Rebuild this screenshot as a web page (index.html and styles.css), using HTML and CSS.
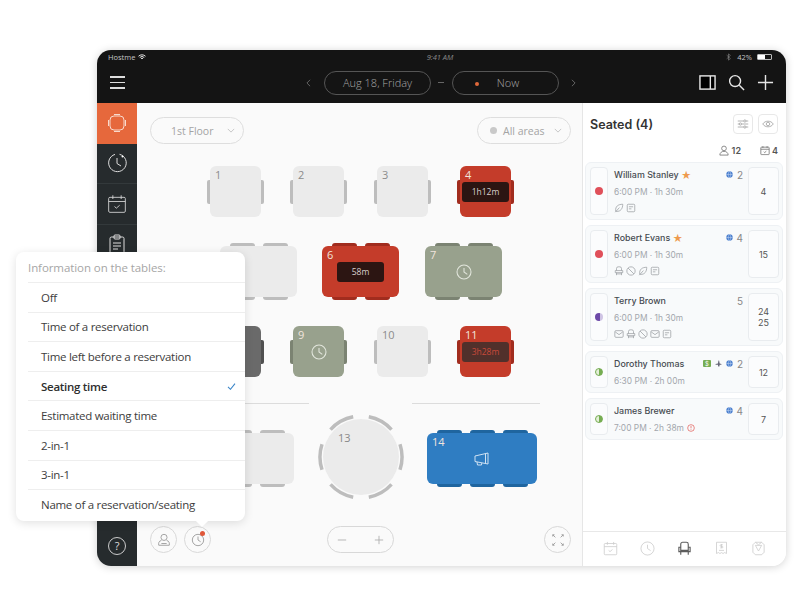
FILE: index.html
```html
<!DOCTYPE html>
<html lang="en">
<head>
    <meta charset="UTF-8">
    <title>Hostme</title>
    <link rel="stylesheet" href="styles.css">
</head>
<body>
    <svg class="defs" width="0" height="0">
        <symbol id="i-clock" viewBox="0 0 24 24"><circle cx="12" cy="12" r="10.5"/><path d="M12 6v6l5 3.5"/></symbol>
        <symbol id="i-cal" viewBox="0 0 24 24"><rect x="2" y="4" width="20" height="18" rx="1.5"/><path d="M2 9h20M7 1.5V6M17 1.5V6M9 15l2.2 2 4-3.5"/></symbol>
        <symbol id="i-leaf" viewBox="0 0 24 24"><path d="M21 3C10 3 3 8 4 19c0 1 1 2 2 1 10 1 15-7 15-17zM3 22l10-11"/></symbol>
        <symbol id="i-note" viewBox="0 0 24 24"><rect x="3" y="3" width="18" height="18" rx="2.5"/><path d="M7 9h10M7 14h6"/></symbol>
        <symbol id="i-chair" viewBox="0 0 24 24"><path d="M6 11V6a4 4 0 0 1 4-4h4a4 4 0 0 1 4 4v5M3 11h18v5H3zM6 16v6M18 16v6M6 19h12"/></symbol>
        <symbol id="i-ban" viewBox="0 0 24 24"><circle cx="12" cy="12" r="10"/><path d="M5 5l14 14"/></symbol>
        <symbol id="i-mail" viewBox="0 0 24 24"><rect x="2" y="4" width="20" height="16" rx="2.5"/><path d="M3 7l9 6.5L21 7"/></symbol>
        <symbol id="i-globe" viewBox="0 0 24 24"><circle cx="12" cy="12" r="11" class="solid"/><path class="cut" d="M1 12h22M12 1c-6 6-6 16 0 22M12 1c6 6 6 16 0 22"/></symbol>
    </svg>

    <div class="tablet">
        <div class="status-bar">
            <div class="status-left">
                <span>Hostme</span>
                <svg class="wifi" viewBox="0 0 16 12"><path d="M1 4.5a10 10 0 0 1 14 0M3.5 7a6.5 6.5 0 0 1 9 0M6 9.3a3 3 0 0 1 4 0"/></svg>
            </div>
            <span class="status-time">9:41 AM</span>
            <div class="status-right">
                <svg class="bt" viewBox="0 0 8 12"><path d="M1 3l6 5.5L4 11V1l3 2.5L1 9"/></svg>
                <span>42%</span>
                <span class="battery"><span class="battery-level"></span></span>
            </div>
        </div>

        <div class="top-bar">
            <div class="burger"><span></span><span></span><span></span></div>
            <div class="date-nav">
                <svg class="chev" viewBox="0 0 6 10"><path d="M5 1L1 5l4 4"/></svg>
                <div class="date-pill">Aug 18, Friday</div>
                <span class="dash"></span>
                <div class="date-pill now"><span class="now-dot"></span>Now</div>
                <svg class="chev" viewBox="0 0 6 10"><path d="M1 1l4 4-4 4"/></svg>
            </div>
            <div class="top-actions">
                <svg class="top-icon" viewBox="0 0 18 18"><rect x="1" y="2" width="16" height="14" class="panel-fill"/><rect x="1" y="2" width="16" height="14"/><path d="M12 2v14"/></svg>
                <svg class="top-icon" viewBox="0 0 18 18"><circle cx="7.5" cy="7.5" r="5.8"/><path d="M12 12l5 5"/></svg>
                <svg class="top-icon" viewBox="0 0 18 18"><path d="M9 1v16M1 9h16"/></svg>
            </div>
        </div>

        <div class="main">
            <div class="sidebar">
                <div class="side-item active">
                    <svg viewBox="0 0 20 20"><rect x="3" y="3" width="14" height="14" rx="4"/><path d="M1.5 7v6M18.5 7v6M7 1.5h6M7 18.5h6"/></svg>
                </div>
                <div class="side-item">
                    <svg viewBox="0 0 20 20"><path d="M12.5 1.3A8.8 8.8 0 1 1 8 1.4"/><circle cx="15.5" cy="3.5" r="1" class="fill"/><path d="M10 5v5.5l4 2.5"/></svg>
                </div>
                <div class="side-item">
                    <svg viewBox="0 0 20 20"><use href="#i-cal"/></svg>
                </div>
                <div class="side-item">
                    <svg viewBox="0 0 20 20"><rect x="3" y="3" width="14" height="16" rx="1.5"/><rect x="7" y="1" width="6" height="4" rx="1"/><path d="M6 9h8M6 12h8M6 15h5"/></svg>
                </div>
                <div class="side-item help"><span class="help-mark">?</span></div>
            </div>

            <div class="floor">
                <div class="floor-head">
                    <div class="select">1st Floor<svg class="caret" viewBox="0 0 10 6"><path d="M1 1l4 4 4-4"/></svg></div>
                    <div class="select areas"><span class="area-dot"></span>All areas<svg class="caret" viewBox="0 0 10 6"><path d="M1 1l4 4 4-4"/></svg></div>
                </div>

                <div class="table square t1"><b>1</b><i class="seat seat-l"></i><i class="seat seat-r"></i></div>
                <div class="table square t2"><b>2</b><i class="seat seat-l"></i><i class="seat seat-r"></i></div>
                <div class="table square t3"><b>3</b><i class="seat seat-l"></i><i class="seat seat-r"></i></div>
                <div class="table square red t4"><b>4</b><i class="seat seat-l"></i><i class="seat seat-r"></i><span class="timer">1h12m</span></div>

                <div class="table wide t5"><i class="seat seat-t1"></i><i class="seat seat-t2"></i><i class="seat seat-b1"></i><i class="seat seat-b2"></i></div>
                <div class="table wide red t6"><b>6</b><i class="seat seat-t1"></i><i class="seat seat-t2"></i><i class="seat seat-b1"></i><i class="seat seat-b2"></i><span class="timer">58m</span></div>
                <div class="table wide green t7"><b>7</b><i class="seat seat-t1"></i><i class="seat seat-t2"></i><i class="seat seat-b1"></i><i class="seat seat-b2"></i><svg class="table-icon"><use href="#i-clock"/></svg></div>

                <div class="table square dark t8"><i class="seat seat-l"></i><i class="seat seat-r"></i></div>
                <div class="table square green t9"><b>9</b><i class="seat seat-l"></i><i class="seat seat-r"></i><svg class="table-icon"><use href="#i-clock"/></svg></div>
                <div class="table square t10"><b>10</b><i class="seat seat-l"></i><i class="seat seat-r"></i></div>
                <div class="table square red t11"><b>11</b><i class="seat seat-l"></i><i class="seat seat-r"></i><span class="timer late">3h28m</span></div>

                <div class="divider d1"></div>
                <div class="divider d2"></div>

                <div class="table wide t12"><i class="seat seat-t1"></i><i class="seat seat-t2"></i><i class="seat seat-b1"></i><i class="seat seat-b2"></i></div>
                <div class="table round t13">
                    <svg class="round-seats" viewBox="0 0 88 88">
                        <path d="M83 31.3A41 41 0 0 1 83 56.7M5 56.7A41 41 0 0 1 5 31.3M13.5 16.6A41 41 0 0 1 36.2 3.8M51.8 3.8A41 41 0 0 1 74.5 16.6M74.5 71.4A41 41 0 0 1 51.8 84.2M36.2 84.2A41 41 0 0 1 13.5 71.4"/>
                    </svg>
                    <b>13</b>
                </div>
                <div class="table wide blue t14"><b>14</b><i class="seat seat-t1"></i><i class="seat seat-t2"></i><i class="seat seat-t3"></i><i class="seat seat-b1"></i><i class="seat seat-b2"></i><i class="seat seat-b3"></i>
                    <svg class="table-icon" viewBox="0 0 16 16"><path d="M1 5l13-3v11L1 10.500zM11.500 2.700v9.800M3 11l.5 3h4l.3-2"/></svg>
                </div>

                <div class="floor-foot">
                    <div class="foot-left">
                        <div class="round-btn">
                            <svg viewBox="0 0 16 16"><circle cx="8" cy="5" r="3.500"/><path d="M5 8.500C2 9 1.500 12 2 14h12c.5-2 0-5-3-5.500M5 12h6"/></svg>
                        </div>
                        <div class="round-btn">
                            <svg viewBox="0 0 16 16"><circle cx="8" cy="8" r="6.500"/><path d="M8 4v4l3 2"/></svg>
                            <span class="btn-dot"></span>
                        </div>
                    </div>
                    <div class="zoom">
                        <svg viewBox="0 0 12 12"><path d="M1 6h10"/></svg>
                        <svg viewBox="0 0 12 12"><path d="M1 6h10M6 1v10"/></svg>
                    </div>
                    <div class="foot-right">
                        <div class="round-btn">
                            <svg viewBox="0 0 16 16"><path d="M2 2l3 3M2 2v2M2 2h2M14 2l-3 3M14 2v2M14 2h-2M2 14l3-3M2 14v-2M2 14h2M14 14l-3-3M14 14v-2M14 14h-2"/></svg>
                        </div>
                    </div>
                </div>
            </div>

            <div class="panel">
                <div class="panel-head">
                    <h3>Seated (4)</h3>
                    <div class="icon-btn"><svg viewBox="0 0 16 16"><path d="M1 4h8M12 4h3M1 8h2M6 8h9M1 12h8M12 12h3"/><circle cx="10.500" cy="4" r="1.500"/><circle cx="4.500" cy="8" r="1.500"/><circle cx="10.500" cy="12" r="1.500"/></svg></div>
                    <div class="icon-btn"><svg viewBox="0 0 16 16"><path d="M1 8c3-5 11-5 14 0-3 5-11 5-14 0z"/><circle cx="8" cy="8" r="2.300"/></svg></div>
                </div>
                <div class="counts">
                    <svg class="count-icon" viewBox="0 0 12 12"><circle cx="6" cy="3.500" r="2.800"/><path d="M1 11.500c0-6 10-6 10 0z"/></svg><span class="count-num">12</span>
                    <svg class="count-icon cal" viewBox="0 0 24 24"><use href="#i-cal"/></svg><span>4</span>
                </div>

                <div class="cards">
                    <div class="card">
                        <div class="slot"><span class="dot"></span></div>
                        <div class="info">
                            <div class="name">William Stanley <span class="star">★</span><span class="guests"><svg class="mini globe"><use href="#i-globe"/></svg>2</span></div>
                            <div class="time">6:00 PM · 1h 30m</div>
                            <div class="tags"><svg><use href="#i-leaf"/></svg><svg><use href="#i-note"/></svg></div>
                        </div>
                        <div class="slot number">4</div>
                    </div>
                    <div class="card">
                        <div class="slot"><span class="dot"></span></div>
                        <div class="info">
                            <div class="name">Robert Evans <span class="star">★</span><span class="guests"><svg class="mini globe"><use href="#i-globe"/></svg>4</span></div>
                            <div class="time">6:00 PM · 1h 30m</div>
                            <div class="tags"><svg><use href="#i-chair"/></svg><svg><use href="#i-ban"/></svg><svg><use href="#i-leaf"/></svg><svg><use href="#i-note"/></svg></div>
                        </div>
                        <div class="slot number">15</div>
                    </div>
                    <div class="card">
                        <div class="slot"><span class="dot moon"></span></div>
                        <div class="info">
                            <div class="name">Terry Brown<span class="guests">5</span></div>
                            <div class="time">6:00 PM · 1h 30m</div>
                            <div class="tags"><svg><use href="#i-mail"/></svg><svg><use href="#i-chair"/></svg><svg><use href="#i-ban"/></svg><svg><use href="#i-mail"/></svg><svg><use href="#i-note"/></svg></div>
                        </div>
                        <div class="slot number">24<br>25</div>
                    </div>
                    <div class="card">
                        <div class="slot"><span class="dot half"></span></div>
                        <div class="info">
                            <div class="name">Dorothy Thomas<span class="guests"><span class="money">$</span><svg class="mini plane" viewBox="0 0 12 12"><path d="M1 7l4-1 1-5h1l1 5 3 1v1H8l-.500 3h-2L5 8H1z"/></svg><svg class="mini globe"><use href="#i-globe"/></svg>2</span></div>
                            <div class="time">6:30 PM · 2h 00m</div>
                        </div>
                        <div class="slot number">12</div>
                    </div>
                    <div class="card">
                        <div class="slot"><span class="dot half"></span></div>
                        <div class="info">
                            <div class="name">James Brewer<span class="guests"><svg class="mini globe"><use href="#i-globe"/></svg>4</span></div>
                            <div class="time">7:00 PM · 2h 38m <svg class="alert" viewBox="0 0 12 12"><circle cx="6" cy="6" r="5"/><path d="M6 3v3.500M6 8v1"/></svg></div>
                        </div>
                        <div class="slot number">7</div>
                    </div>
                </div>

                <div class="tabs">
                    <svg viewBox="0 0 24 24"><use href="#i-cal"/></svg>
                    <svg viewBox="0 0 24 24"><use href="#i-clock"/></svg>
                    <svg class="tab-on" viewBox="0 0 24 24"><path d="M6 10V5a3 3 0 0 1 3-3h6a3 3 0 0 1 3 3v5M3 10h3v5h12v-5h3v7H3zM6 17v5M18 17v5"/></svg>
                    <svg viewBox="0 0 24 24"><path d="M4 2h16v18l-3-1.500-2.500 1.500-2.500-1.500L9.500 20 7 18.500 4 20zM8 15h8M12 5v6M14 6h-3a1.200 1.200 0 0 0 0 2.500h2a1.200 1.200 0 0 1 0 2.500h-3"/></svg>
                    <svg viewBox="0 0 24 24"><path d="M7 2h10l4 4v12l-4 4H7l-4-4V6zM7 2l5 4 5-4M7 7h10l-5 9z"/></svg>
                </div>
            </div>
        </div>
    </div>

    <div class="popover">
        <div class="pop-title">Information on the tables:</div>
        <div class="pop-row">Off</div>
        <div class="pop-row">Time of a reservation</div>
        <div class="pop-row">Time left before a reservation</div>
        <div class="pop-row selected">Seating time<svg class="check" viewBox="0 0 12 10"><path d="M1 5.500L4.500 9 11 1"/></svg></div>
        <div class="pop-row">Estimated waiting time</div>
        <div class="pop-row">2-in-1</div>
        <div class="pop-row">3-in-1</div>
        <div class="pop-row">Name of a reservation/seating</div>
        <span class="pop-arrow"></span>
    </div>
</body>
</html>
```

FILE: styles.css
```css
* {
    margin: 0;
    padding: 0;
    box-sizing: border-box;
}

body {
    position: relative;
    width: 800px;
    height: 610px;
    overflow: hidden;
    background: white;
    font-family: "Open Sans", sans-serif;
}

svg {
    fill: none;
    stroke: currentColor;
    stroke-width: 1.5;
}

.defs {
    position: absolute;
}

.tablet {
    position: absolute;
    left: 97px;
    top: 50px;
    width: 689px;
    height: 516px;
    display: flex;
    flex-direction: column;
    border-radius: 14px;
    overflow: hidden;
    background: white;
    box-shadow: 0 1px 8px rgba(0,0,0,0.18);
}

/* top */
.status-bar {
    height: 20px;
    display: grid;
    grid-template-columns: 1fr auto 1fr;
    align-items: center;
    padding: 0 14px 6px 11px;
    background: #141414;
    color: #c4c4c4;
    font-size: 7.5px;
}

.status-left {
    display: flex;
    align-items: center;
    gap: 3px;
}

.wifi {
    width: 8px;
    height: 6px;
    color: #e2e2e2;
    stroke-width: 2;
}

.status-time {
    font-style: italic;
    color: #8a8a8a;
}

.status-right {
    display: flex;
    justify-content: flex-end;
    align-items: center;
    gap: 4px;
}

.bt {
    width: 5px;
    height: 8px;
    stroke-width: 1;
    margin-right: 2px;
    color: #888;
}

.battery {
    width: 15px;
    height: 6px;
    border: 1px solid #bbb;
    border-radius: 1px;
    margin-left: 1px;
    display: block;
}

.battery-level {
    display: block;
    width: 7px;
    height: 100%;
    background: white;
}

.top-bar {
    height: 33px;
    display: grid;
    grid-template-columns: 1fr auto 1fr;
    align-items: center;
    padding: 0 14px 8px 13px;
    background: #141414;
    color: #a5a5a5;
}

.burger {
    width: 15px;
    display: flex;
    flex-direction: column;
    gap: 4px;
}

.burger span {
    height: 1.500px;
    background: #ddd;
}

.date-nav {
    display: flex;
    align-items: center;
}

.chev {
    width: 5px;
    height: 8px;
    color: #777;
    stroke-width: 1;
}

.date-pill {
    position: relative;
    width: 107px;
    height: 24px;
    margin: 0 7px 0 13px;
    border: 1px solid #555;
    border-radius: 12px;
    display: flex;
    justify-content: center;
    align-items: center;
    font-size: 11px;
    font-weight: 300;
    color: #a8a8a8;
}

.now {
    margin: 0 12px 0 8px;
    padding-left: 5px;
}

.dash {
    width: 6px;
    height: 1px;
    background: #666;
}

.now-dot {
    position: absolute;
    left: 22px;
    top: 10px;
    width: 4px;
    height: 4px;
    border-radius: 50%;
    background: #e0683a;
}

.top-actions {
    display: flex;
    justify-content: flex-end;
    gap: 12px;
    margin-right: -2px;
}

.top-icon {
    width: 17px;
    height: 17px;
    color: #e6e6e6;
}

.panel-fill {
    fill: black;
    stroke: none;
}

/* body */
.main {
    flex: 1;
    display: flex;
    min-height: 0;
}

.sidebar {
    width: 40px;
    display: flex;
    flex-direction: column;
    background: #262b2d;
    color: #ddd;
}

.side-item {
    height: 40.500px;
    display: flex;
    justify-content: center;
    align-items: center;
    border-bottom: 1px solid #33393b;
}

.side-item svg {
    width: 20px;
    height: 20px;
    stroke-width: 1;
}

.side-item .fill {
    fill: white;
    stroke: none;
}

.active {
    background: #e6683c;
    border-bottom: none;
    color: #f8d9cc;
}

.help {
    margin-top: auto;
    border-bottom: none;
}

.help-mark {
    width: 18px;
    height: 18px;
    border: 1px solid #ccc;
    border-radius: 50%;
    text-align: center;
    font-size: 11px;
    line-height: 16px;
    color: #ddd;
}

.floor {
    position: relative;
    flex: 1;
    display: flex;
    flex-direction: column;
    background: #fafafa;
}

.floor-head {
    display: flex;
    justify-content: space-between;
    padding: 14px 11px 0 13px;
}

.select {
    width: 94px;
    height: 27px;
    padding-left: 20px;
    display: flex;
    align-items: center;
    border: 1px solid #dedede;
    border-radius: 14px;
    font-size: 10.500px;
    color: #a4a4a4;
}

.areas {
    padding-left: 12px;
}

.area-dot {
    width: 7px;
    height: 7px;
    margin-right: 6px;
    border-radius: 50%;
    background: #c9c9c9;
}

.caret {
    width: 8px;
    height: 5px;
    margin-left: auto;
    margin-right: 8px;
    stroke-width: 1;
    color: #bbb;
}

/* tables */
.table {
    position: absolute;
    display: flex;
    justify-content: center;
    align-items: center;
    height: 51px;
    border-radius: 6px;
    background: #ebebeb;
    --seat: #bdbdbd;
}

.table b {
    position: absolute;
    left: 5px;
    top: 1px;
    font-size: 11px;
    font-weight: 400;
    color: #8c8c8c;
}

.square { width: 51px; }
.wide { width: 77px; }

.red { background: #c43c2a; --seat: #a12c1e; }
.green { background: #98a18d; --seat: #7b8372; }
.dark { background: #6a6a6a; --seat: #505050; }
.blue { background: #2f7dc2; --seat: #1f659f; }
.red b, .green b, .blue b { color: #f1e4dd; }

.seat {
    position: absolute;
    background: var(--seat);
}

.seat-l, .seat-r { top: 14px; width: 3px; height: 24px; }
.seat-l { left: -3px; border-radius: 2px 0 0 2px; }
.seat-r { right: -3px; border-radius: 0 2px 2px 0; }

.seat-t1, .seat-t2, .seat-t3, .seat-b1, .seat-b2, .seat-b3 { width: 25px; height: 3px; }
.seat-t1, .seat-t2, .seat-t3 { top: -3px; border-radius: 3px 3px 0 0; }
.seat-b1, .seat-b2, .seat-b3 { bottom: -3px; border-radius: 0 0 3px 3px; }
.seat-t1, .seat-b1 { left: 10px; }
.seat-t2, .seat-b2 { left: 43px; }
.seat-t3, .seat-b3 { left: 76px; }

.timer {
    width: 47px;
    height: 20px;
    border-radius: 3px;
    background: #2c1512;
    color: #d8cfcc;
    font-size: 8.500px;
    text-align: center;
    line-height: 20px;
}

.late {
    background: #51302b;
    color: #c8493a;
}

.table-icon {
    width: 16px;
    height: 16px;
    stroke-width: 1.600;
    color: #e2e6dc;
}

.t1 { left: 73px; top: 63px; }
.t2 { left: 156px; top: 63px; }
.t3 { left: 240px; top: 63px; }
.t4 { left: 323px; top: 63px; }
.t5 { left: 83px; top: 143px; }
.t6 { left: 185px; top: 143px; }
.t7 { left: 288px; top: 143px; }
.t8 { left: 73px; top: 223px; }
.t9 { left: 156px; top: 223px; }
.t10 { left: 240px; top: 223px; }
.t11 { left: 323px; top: 223px; }
.t12 { left: 80px; top: 330px; }
.t14 { left: 290px; top: 330px; width: 110px; }

.t14 .table-icon {
    color: #cfe2f3;
    stroke-width: 1;
}

.round {
    left: 186px;
    top: 316px;
    width: 76px;
    height: 76px;
    border-radius: 50%;
}

.round b {
    left: 15px;
    top: 11px;
    color: #888;
}

.round-seats {
    position: absolute;
    left: -6px;
    top: -6px;
    width: 88px;
    height: 88px;
    stroke: #bdbdbd;
    stroke-width: 3.500;
}

.divider {
    position: absolute;
    top: 300px;
    height: 1px;
    background: #dcdcdc;
}

.d1 { left: 100px; width: 72px; }
.d2 { left: 275px; width: 128px; }

/* floor footer */
.floor-foot {
    margin-top: auto;
    display: grid;
    grid-template-columns: 1fr auto 1fr;
    align-items: center;
    padding: 0 11px 13px 13px;
}

.foot-left {
    display: flex;
    gap: 7px;
}

.foot-right {
    display: flex;
    justify-content: flex-end;
}

.round-btn {
    position: relative;
    width: 27px;
    height: 27px;
    display: flex;
    justify-content: center;
    align-items: center;
    border: 1px solid #d8d8d8;
    border-radius: 50%;
    color: #999;
}

.round-btn svg {
    width: 14px;
    height: 14px;
    stroke-width: 1;
}

.btn-dot {
    position: absolute;
    top: 4px;
    right: 5px;
    width: 5px;
    height: 5px;
    border-radius: 50%;
    background: #e0583a;
}

.zoom {
    width: 67px;
    height: 27px;
    padding: 0 9px;
    display: flex;
    justify-content: space-between;
    align-items: center;
    border: 1px solid #d8d8d8;
    border-radius: 14px;
    color: #aaa;
}

.zoom svg {
    width: 10px;
    height: 10px;
    stroke-width: 1;
}

/* right panel */
.panel {
    width: 204px;
    display: flex;
    flex-direction: column;
    border-left: 1px solid #e6e6e6;
    background: white;
    font-family: Inter, sans-serif;
}

.panel-head {
    display: flex;
    align-items: center;
    gap: 5px;
    padding: 11px 8px 0 7px;
}

.panel-head h3 {
    flex: 1;
    font-size: 12.500px;
    font-weight: 600;
    color: #333;
}

.icon-btn {
    width: 20px;
    height: 20px;
    display: flex;
    justify-content: center;
    align-items: center;
    border: 1px solid #e8e8e8;
    border-radius: 4px;
    color: #999;
}

.icon-btn svg {
    width: 12px;
    height: 12px;
    stroke-width: 1;
}

.counts {
    height: 16px;
    margin: 8px 0 4px;
    padding-right: 8px;
    display: flex;
    justify-content: flex-end;
    align-items: center;
    font-size: 9px;
    font-weight: 600;
    color: #555;
}

.count-icon {
    width: 10px;
    height: 11px;
    margin-right: 3px;
    stroke-width: 1;
    color: #777;
}

.count-icon.cal {
    margin-right: 2px;
    stroke-width: 2;
}

.count-num {
    margin-right: 19px;
}

.cards {
    display: flex;
    flex-direction: column;
    gap: 5px;
    padding: 0 3px 0 2px;
}

.card {
    display: grid;
    grid-template-columns: 18px 1fr 31px;
    column-gap: 6px;
    padding: 4px 3px 4px 4px;
    border: 1px solid #eef1f4;
    border-radius: 6px;
    background: #f8fafb;
}

.slot {
    display: flex;
    justify-content: center;
    align-items: center;
    background: #fbfcfd;
    border: 1px solid #e9ecef;
    border-radius: 4px;
}

.number {
    text-align: center;
    font-size: 9px;
    line-height: 11px;
    color: #555;
}

.dot {
    width: 8px;
    height: 8px;
    border-radius: 50%;
    background: #e0505a;
}

.moon {
    background: linear-gradient(to right, #6d4aa8 65%, #cfc4e4 65%);
}

.half {
    background: linear-gradient(to right, #e4efd8 50%, #76ad52 50%);
    border: 1px solid #76ad52;
}

.name {
    display: flex;
    align-items: center;
    height: 15px;
    font-size: 8.900px;
    font-weight: 500;
    color: #454a50;
    white-space: pre;
}

.star {
    color: #ee9a4d;
    font-size: 10px;
}

.guests {
    margin-left: auto;
    margin-right: -1px;
    display: flex;
    align-items: center;
    gap: 4px;
    font-size: 10px;
    font-weight: 400;
    color: #888;
}

.mini {
    width: 7px;
    height: 7px;
}

.globe {
    stroke: none;
}

.solid {
    fill: #4a7fcf;
    stroke: none;
}

.cut {
    stroke: #dbe6f5;
    stroke-width: 1.500;
}

.plane {
    fill: #667;
    stroke: none;
}

.money {
    width: 8px;
    height: 7px;
    border-radius: 1px;
    background: #76ad52;
    color: white;
    font-size: 6px;
    line-height: 7px;
    text-align: center;
}

.time {
    display: flex;
    align-items: center;
    gap: 3px;
    height: 15px;
    margin-top: 2px;
    font-size: 8.400px;
    color: #a3a7ad;
}

.alert {
    width: 8px;
    height: 8px;
    stroke-width: 1;
    color: #e0504a;
}

.tags {
    margin-top: 4px;
    padding-bottom: 2px;
    display: flex;
    gap: 2px;
    color: #9a9ea3;
}

.tags svg {
    width: 10px;
    height: 10px;
    stroke-width: 1.800;
}

.tabs {
    margin-top: auto;
    height: 35px;
    padding-bottom: 2px;
    display: grid;
    grid-template-columns: repeat(5, 37px);
    justify-content: center;
    align-items: center;
    justify-items: center;
    border-top: 1px solid #e8e8e8;
    color: #cdcdcd;
}

.tabs svg {
    width: 15px;
    height: 15px;
    stroke-width: 1.300;
}

.tabs .tab-on {
    color: #5d5d5d;
    stroke-width: 1.800;
}

/* popover */
.popover {
    position: absolute;
    left: 16px;
    top: 252px;
    width: 229px;
    height: 269px;
    background: white;
    border-radius: 8px;
    box-shadow: 0 2px 10px rgba(0,0,0,0.12);
    font-size: 11.500px;
    color: #3d3d3d;
}

.pop-title {
    height: 30px;
    margin-left: 12px;
    line-height: 31px;
    letter-spacing: -0.08px;
    color: #a6a6a6;
}

.pop-row {
    height: 29.600px;
    margin-left: 12px;
    padding: 0 9px 0 13px;
    display: flex;
    justify-content: space-between;
    align-items: center;
    border-top: 1px solid #eeeeee;
    letter-spacing: -0.28px;
}

.selected {
    font-weight: 600;
    color: #2e2e2e;
}

.check {
    width: 9px;
    height: 7px;
    color: #3a85c8;
}

.pop-arrow {
    position: absolute;
    left: 181px;
    bottom: -4px;
    width: 10px;
    height: 10px;
    background: white;
    transform: rotate(45deg);
}
```
